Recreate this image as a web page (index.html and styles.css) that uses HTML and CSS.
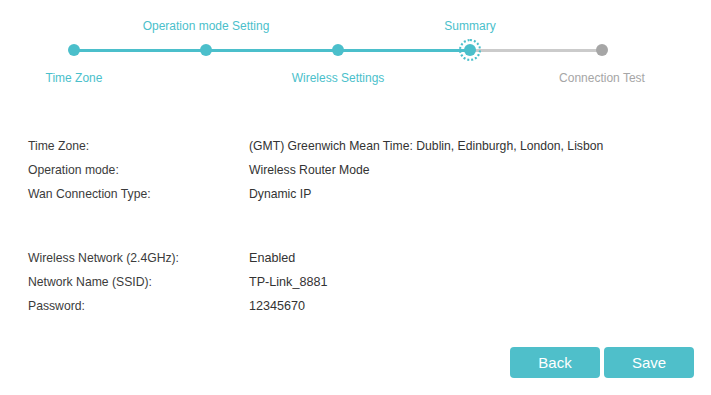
FILE: index.html
```html
<!DOCTYPE html>
<html lang="en">
<head>
    <meta charset="UTF-8">
    <meta name="viewport" content="width=device-width, initial-scale=1.0">
    <title>Quick Setup - Summary</title>
    <link rel="stylesheet" href="styles.css">
</head>
<body>

    <!-- progress steps -->
    <div class="steps">
        <div class="step done">
            <span class="step-top"></span>
            <span class="step-track"><i class="dot"></i></span>
            <span class="step-bottom">Time Zone</span>
        </div>
        <div class="step done">
            <span class="step-top">Operation mode Setting</span>
            <span class="step-track"><i class="dot"></i></span>
            <span class="step-bottom"></span>
        </div>
        <div class="step done">
            <span class="step-top"></span>
            <span class="step-track"><i class="dot"></i></span>
            <span class="step-bottom">Wireless Settings</span>
        </div>
        <div class="step current">
            <span class="step-top">Summary</span>
            <span class="step-track"><i class="dot"></i></span>
            <span class="step-bottom"></span>
        </div>
        <div class="step last">
            <span class="step-top"></span>
            <span class="step-track"><i class="dot"></i></span>
            <span class="step-bottom">Connection Test</span>
        </div>
    </div>

    <div class="summary">
        <div class="summary-group">
            <div class="row"><span class="label">Time Zone:</span><span class="value">(GMT) Greenwich Mean Time: Dublin, Edinburgh, London, Lisbon</span></div>
            <div class="row"><span class="label">Operation mode:</span><span class="value">Wireless Router Mode</span></div>
            <div class="row"><span class="label">Wan Connection Type:</span><span class="value">Dynamic IP</span></div>
        </div>
        <div class="summary-group wireless">
            <div class="row"><span class="label">Wireless Network (2.4GHz):</span><span class="value">Enabled</span></div>
            <div class="row"><span class="label">Network Name (SSID):</span><span class="value">TP-Link_8881</span></div>
            <div class="row"><span class="label">Password:</span><span class="value">12345670</span></div>
        </div>
    </div>

    <div class="actions">
        <button class="btn">Back</button>
        <button class="btn">Save</button>
    </div>

</body>
</html>
```

FILE: styles.css
```css
body {
    font-family: "Liberation Sans", Arial, sans-serif;
    font-size: 12px;
    color: #333;
    background-color: #fff;
    margin: 0;
    padding: 0;
}

.steps {
    display: flex;
    padding: 18px 0 0 8px;
}

.step {
    width: 132px;
    display: flex;
    flex-direction: column;
    align-items: center;
    color: #4bbfcb;
}

.step-top,
.step-bottom {
    height: 16px;
    line-height: 16px;
    white-space: nowrap;
}

.step-track {
    position: relative;
    width: 100%;
    height: 12px;
    margin: 10px 0 14px;
    display: flex;
    justify-content: center;
}

/* connector to the next step */
.step-track::after {
    content: "";
    position: absolute;
    left: 50%;
    right: -50%;
    top: 5px;
    height: 3px;
    background-color: #cbcbcb;
}

.step.done .step-track::after {
    background-color: #4bbfcb;
}

.step.last .step-track::after {
    display: none;
}

.dot {
    position: relative;
    z-index: 1;
    width: 12px;
    height: 12px;
    border-radius: 50%;
    background-color: #4bbfcb;
}

.step.current .dot::before {
    content: "";
    position: absolute;
    left: -5px;
    top: -5px;
    width: 18px;
    height: 18px;
    border: 2px dotted #4bbfcb;
    border-radius: 50%;
}

.step.last {
    color: #a6a6a6;
}

.step.last .dot {
    background-color: #a6a6a6;
}

.summary {
    padding: 48px 0 0 28px;
    display: flex;
    flex-direction: column;
    gap: 40px;
    font-size: 12.2px;
}

.row {
    display: flex;
    height: 24px;
    line-height: 24px;
}

.label {
    width: 221px;
    color: #3b3b3b;
}

.value {
    color: #333;
}

.wireless .value {
    font-size: 12.6px;
}

.actions {
    display: flex;
    justify-content: flex-end;
    gap: 4px;
    padding: 29px 17px 0 0;
}

.btn {
    width: 90px;
    height: 31px;
    border: none;
    border-radius: 4px;
    background-color: #4fbfca;
    color: #fff;
    font-family: "Liberation Sans", Arial, sans-serif;
    font-size: 15px;
    cursor: pointer;
}
```
